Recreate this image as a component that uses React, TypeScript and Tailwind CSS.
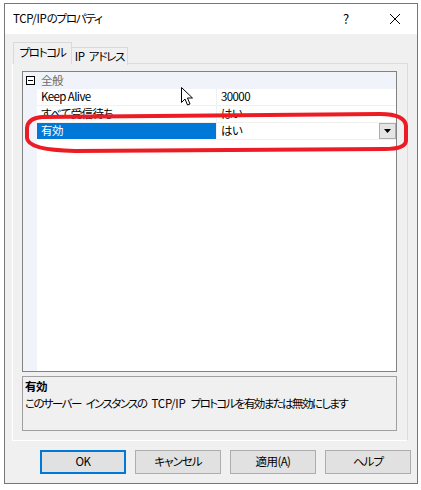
import React from "react";

const F = "font-['Noto_Sans_CJK_JP','Noto_Sans',sans-serif] [font-feature-settings:'palt'] tracking-[-0.6px] whitespace-nowrap";

function Row({
  name,
  value,
  selected,
  dropdown,
}: {
  name: string;
  value: string;
  selected?: boolean;
  dropdown?: boolean;
}) {
  return (
    <div className="flex h-[17px]">
      <div className="w-[14px] bg-[#f0f4fa]" />
      <div
        className={
          "w-[179px] pl-[4px] flex items-center border-b leading-none " +
          (selected ? "bg-[#0078d7] text-white border-white" : "bg-white text-black border-[#f0f0f0]")
        }
      >
        {name}
      </div>
      <div className="w-px bg-[#f0f0f0]" />
      <div className="flex-1 flex items-center bg-white border-b border-[#f0f0f0] pl-[4px] leading-none relative">
        <span>{value}</span>
        {dropdown && (
          <div className="absolute right-0 top-0 w-[17px] h-[16px] border border-[#adadad] bg-[#e5e5e5] flex items-center justify-center">
            <svg width="7" height="4" viewBox="0 0 7 4">
              <path d="M0 0 H7 L3.5 4 Z" fill="#000" />
            </svg>
          </div>
        )}
      </div>
    </div>
  );
}

export default function App() {
  return (
    <div className={"relative w-[421px] h-[490px] bg-white pt-[3px] pl-[4px] text-[11.5px] " + F}>
      <div className="w-[414px] h-[481px] border border-[#777777] bg-[#f0f0f0] flex flex-col">
        {/* Title bar */}
        <div className="h-[30px] bg-white flex items-center pl-[8px] relative shrink-0">
          <span className="text-black leading-none">
            <span className="tracking-[-0.3px]">TCP/IP</span>
            <span className="tracking-[-1.2px]">のプロパティ</span>
          </span>
          <span className="absolute left-[338px] top-[8px] text-[13px] leading-none text-black">?</span>
          <svg className="absolute left-[384px] top-[9px]" width="12" height="12" viewBox="0 0 12 12">
            <path d="M1 1 L11 11 M11 1 L1 11" stroke="#000" strokeWidth="1" />
          </svg>
        </div>

        {/* Body */}
        <div className="flex-1 flex flex-col pl-[7px] pt-[8px]">
          {/* Tabs */}
          <div className="flex items-end h-[22px] pl-[1px] relative z-10">
            <div className="h-[22px] w-[59px] border border-b-0 border-[#d9d9d9] bg-[#f0f0f0] flex items-center justify-center pb-[1px] leading-none tracking-[-1.2px]">
              プロトコル
            </div>
            <div className="h-[18px] w-[56px] border border-l-0 border-b-0 border-[#d9d9d9] bg-[#f0f0f0] flex items-center justify-center leading-none -mb-px">
              <span className="tracking-[-0.3px]">IP</span>
              <span className="w-[4px]" />
              <span className="tracking-[-1.2px]">アドレス</span>
            </div>
          </div>

          {/* Panel */}
          <div className="w-[396px] h-[378px] -mt-px border border-[#dcdcdc] border-l-white border-b-white flex flex-col pl-[9px] pt-[7px]">
            {/* Property grid */}
            <div className="w-[375px] h-[301px] border border-[#828282] bg-white flex flex-col">
              <div className="flex h-[17px] bg-[#f0f4fa]">
                <div className="w-[14px] flex items-center justify-center">
                  <div className="w-[9px] h-[9px] border border-black flex items-center justify-center bg-white">
                    <div className="w-[5px] h-px bg-black" />
                  </div>
                </div>
                <div className="pl-[4px] flex items-center text-[#6d6d6d] leading-none">全般</div>
              </div>
              <Row name="Keep Alive" value="30000" />
              <Row name="すべて受信待ち" value="はい" />
              <Row name="有効" value="はい" selected dropdown />
              <div className="flex-1 flex">
                <div className="w-[14px] bg-[#f0f4fa]" />
                <div className="flex-1" />
              </div>
            </div>

            {/* Description */}
            <div className="w-[375px] h-[55px] mt-[4px] border border-[#a0a0a0] px-[2px] pt-[1px] leading-none">
              <div className="h-[17px] flex items-center font-bold">有効</div>
              <div className="h-[17px] flex items-center">
                <span className="tracking-[-1.6px]">このサーバー</span>
                <span className="w-[5px]" />
                <span className="tracking-[-1.6px]">インスタンスの</span>
                <span className="w-[5px]" />
                <span className="tracking-[-0.2px]">TCP/IP</span>
                <span className="w-[5px]" />
                <span className="tracking-[-1.6px]">プロトコルを有効または無効にします</span>
              </div>
            </div>
          </div>

          {/* Buttons */}
          <div className="flex gap-[9px] pl-[28px] pt-[9px]">
            <div className="w-[86px] h-[24px] border-2 border-[#0078d7] bg-[#e1e1e1] flex items-center justify-center leading-none">
              OK
            </div>
            <div className="w-[86px] h-[24px] border border-[#adadad] bg-[#e1e1e1] flex items-center justify-center leading-none tracking-[-1px]">
              キャンセル
            </div>
            <div className="w-[86px] h-[24px] border border-[#adadad] bg-[#e1e1e1] flex items-center justify-center leading-none">
              適用(A)
            </div>
            <div className="w-[86px] h-[24px] border border-[#adadad] bg-[#e1e1e1] flex items-center justify-center leading-none tracking-[-1px]">
              ヘルプ
            </div>
          </div>
        </div>
      </div>

      {/* Red annotation */}
      <svg className="absolute left-0 top-0 pointer-events-none" width="421" height="490" viewBox="0 0 421 490">
        <path
          d="M42 117 L380 114 Q405 114 406 126 L406 141 Q405 149 385 149 L75 151 Q28 150 27 138 L27 128 Q28 118 42 117 Z"
          fill="none"
          stroke="#ed1c24"
          strokeWidth="4"
        />
      </svg>

      {/* Mouse cursor */}
      <svg className="absolute left-[181px] top-[87px] pointer-events-none" width="13" height="20" viewBox="0 0 13 20">
        <path d="M0.5 0.5 L0.5 15.5 L4 12 L6.5 18 L9 17 L6.5 11 L11.5 11 Z" fill="#fff" stroke="#000" strokeWidth="1" />
      </svg>
    </div>
  );
}
